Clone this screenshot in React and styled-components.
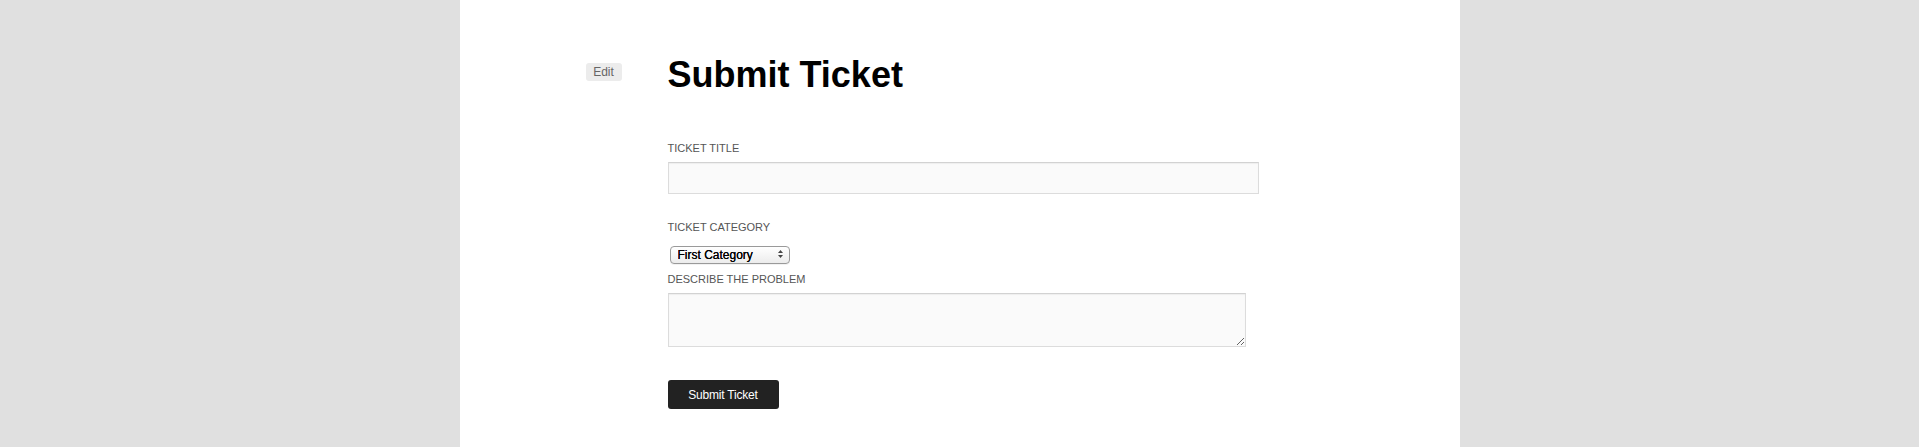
import styled, { createGlobalStyle } from "styled-components";

const GlobalStyle = createGlobalStyle`
  html, body {
    margin: 0;
    padding: 0;
    height: 100%;
    background: #e0e0e0;
    font-family: "Liberation Sans", Arial, sans-serif;
  }
`;

const PAGE = styled.div`
  width: 1000px;
  min-height: 100vh;
  margin: 0 auto;
  background: #ffffff;
  box-sizing: border-box;
  padding: 57px 0 0 126px;
  /* edit gutter | content */
  display: flex;
  align-items: flex-start;
  gap: 46px;
`;

const EDIT = styled.span`
  margin-top: 6px;
  width: 36px;
  height: 18px;
  border-radius: 3px;
  background: #ececec;
  color: #666666;
  font-size: 12px;
  line-height: 18px;
  text-align: center;
`;

const CONTENT = styled.div`
  display: flex;
  flex-direction: column;
  align-items: flex-start;
`;

const TITLE = styled.h1`
  margin: 0;
  font-size: 36px;
  line-height: 36px;
  font-weight: 700;
  color: #000000;
`;

const FORM = styled.form`
  margin-top: 47px;
  display: flex;
  flex-direction: column;
  align-items: flex-start;
`;

const LABEL = styled.label`
  display: block;
  margin-top: ${(p) => p.$gap || 0}px;
  font-size: 11px;
  line-height: 16px;
  text-transform: uppercase;
  color: #555555;
`;

const FIELD = styled.input`
  margin-top: 6px;
  width: 591px;
  height: 32px;
  box-sizing: border-box;
  border: 1px solid #dcdcdc;
  border-top-color: #d2d2d2;
  box-shadow: inset 0 1px 1px rgba(0, 0, 0, 0.05);
  background: #fafafa;
  padding: 0 8px;
  font-family: inherit;
  outline: none;
`;

const AREA = styled.textarea`
  margin-top: 6px;
  width: 578px;
  height: 54px;
  box-sizing: border-box;
  border: 1px solid #dcdcdc;
  border-top-color: #d2d2d2;
  box-shadow: inset 0 1px 1px rgba(0, 0, 0, 0.05);
  background: #fafafa;
  padding: 6px 8px;
  font-family: inherit;
  outline: none;
`;

const SELECT_WRAP = styled.div`
  position: relative;
  margin: 10px 0 0 2px;
  width: 120px;
  height: 18px;
  & svg {
    position: absolute;
    right: 7px;
    top: 5px;
    pointer-events: none;
  }
`;

const SELECT = styled.select`
  appearance: none;
  width: 100%;
  height: 100%;
  box-sizing: border-box;
  margin: 0;
  border: 1px solid #9a9a9a;
  border-radius: 4px;
  background: linear-gradient(#ffffff, #ececec);
  box-shadow: 0 1px 0 rgba(0, 0, 0, 0.05);
  padding: 0 0 0 7px;
  font-family: "Liberation Sans", Arial, sans-serif;
  font-size: 12px;
  color: #000000;
  line-height: 16px;
  text-shadow: 0 0 0.3px #000;
  outline: none;
`;

const SUBMIT = styled.button`
  margin-top: 33px;
  width: 111px;
  height: 29px;
  border: none;
  border-radius: 3px;
  background: #222222;
  color: #ffffff;
  font-family: "Liberation Sans", Arial, sans-serif;
  font-size: 12px;
  letter-spacing: -0.2px;
  cursor: pointer;
`;

const App = () => {
  return (
    <>
      <GlobalStyle />
      <PAGE>
        <EDIT>Edit</EDIT>
        <CONTENT>
          <TITLE>Submit Ticket</TITLE>
          <FORM onSubmit={(e) => e.preventDefault()}>
            <LABEL htmlFor="ticket-title">Ticket Title</LABEL>
            <FIELD id="ticket-title" type="text" />
            <LABEL $gap={25} htmlFor="ticket-category">
              Ticket Category
            </LABEL>
            <SELECT_WRAP>
              <SELECT id="ticket-category" defaultValue="first">
                <option value="first">First Category</option>
                <option value="second">Second Category</option>
              </SELECT>
              <svg width="5" height="8" viewBox="0 0 5 8">
                <path d="M2.5 0 L5 3 H0 Z" fill="#444" />
                <path d="M2.5 8 L5 5 H0 Z" fill="#444" />
              </svg>
            </SELECT_WRAP>
            <LABEL $gap={8} htmlFor="ticket-problem">
              Describe the problem
            </LABEL>
            <AREA id="ticket-problem" />
            <SUBMIT type="submit">Submit Ticket</SUBMIT>
          </FORM>
        </CONTENT>
      </PAGE>
    </>
  );
};

export default App;
